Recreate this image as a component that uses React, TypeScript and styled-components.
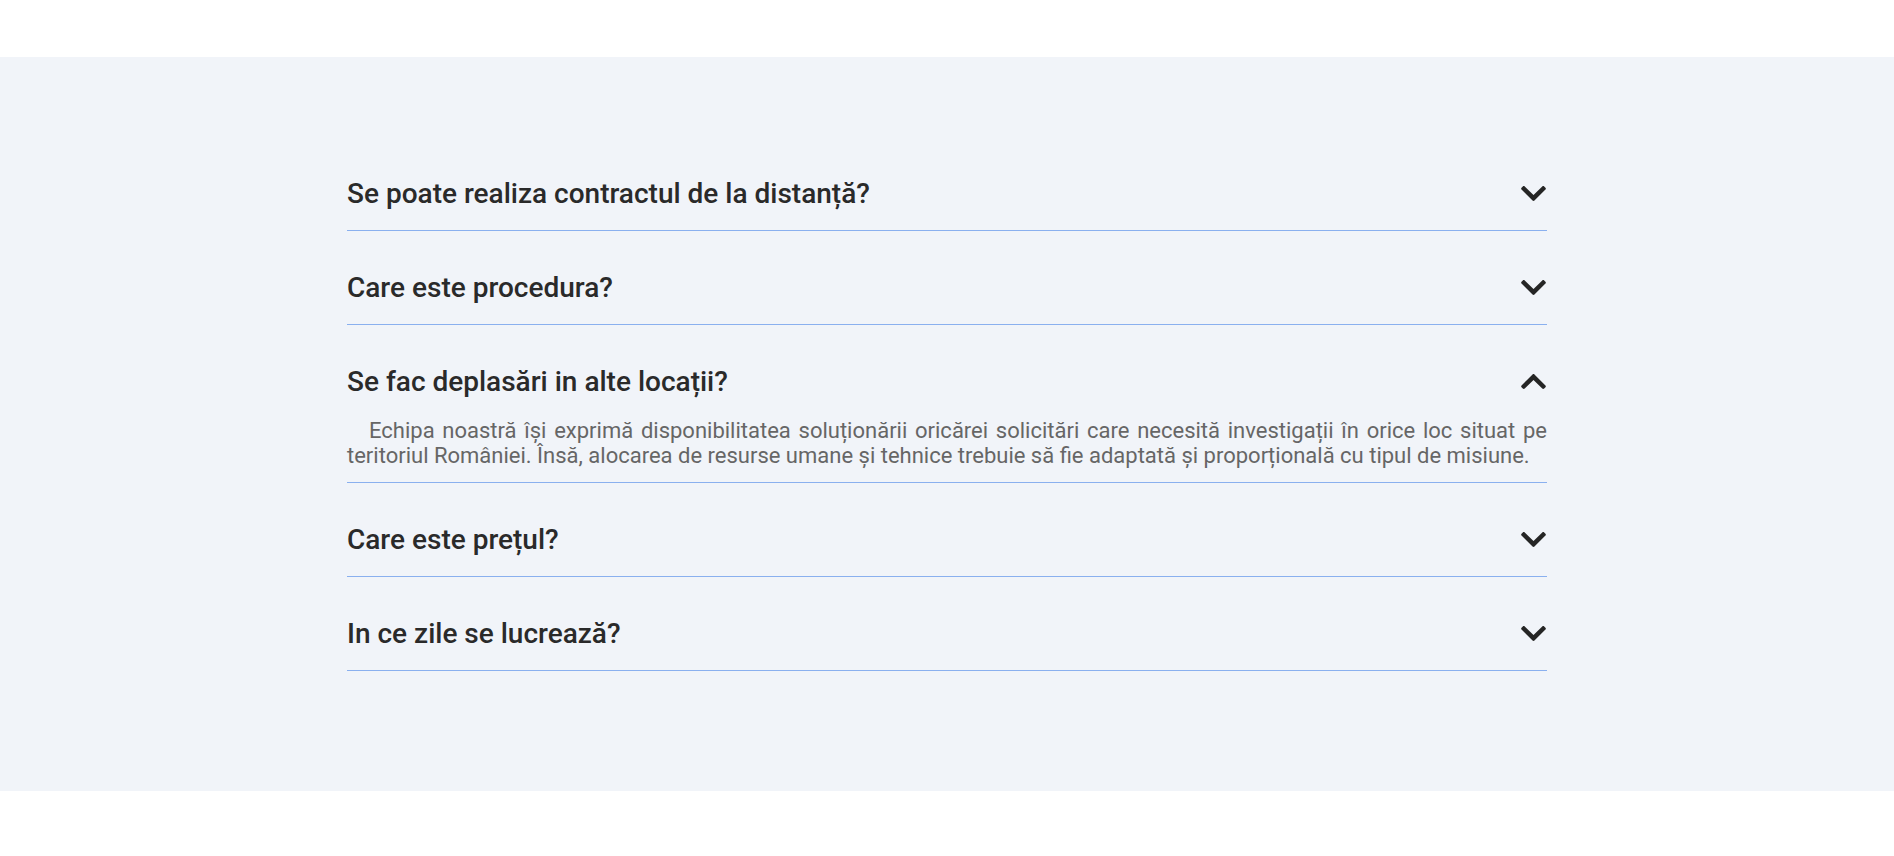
import React, { useState } from "react";
import styled, { createGlobalStyle } from "styled-components";
import { FaChevronDown, FaChevronUp } from "react-icons/fa";

const GlobalStyle = createGlobalStyle`
  html, body { margin: 0; padding: 0; background: #ffffff; }
  body { font-family: Roboto, "Noto Sans", "Liberation Sans", sans-serif; }
  * { box-sizing: border-box; }
`;

const Page = styled.div`
  padding-top: 57px;
  min-height: 856px;
`;

const Section = styled.section`
  background: #f1f4f9;
  padding: 80px 0 120px;
`;

const List = styled.div`
  width: 1200px;
  margin: 0 auto;
  display: flex;
  flex-direction: column;
`;

const Item = styled.div`
  border-bottom: 1px solid #8ab0ef;
`;

const Header = styled.button`
  all: unset;
  display: flex;
  align-items: center;
  justify-content: space-between;
  width: 100%;
  padding: 40px 0 20px;
  cursor: pointer;
`;

const Title = styled.h3`
  margin: 0;
  font-family: Roboto, "Noto Sans", sans-serif;
  font-weight: 500;
  font-size: 28px;
  line-height: normal;
  color: #2a2a2a;
`;

const Icon = styled.span`
  display: flex;
  color: #252525;
  font-size: 29px;
  margin-right: -1px;
`;

const Body = styled.p`
  margin: 0;
  padding: 0 0 13px;
  font-family: Roboto, "Noto Sans", sans-serif;
  font-size: 22px;
  line-height: 25.3px;
  color: #666666;
  text-align: justify;
  text-indent: 22px;
`;

const faqs = [
  { q: "Se poate realiza contractul de la distanță?", a: "" },
  { q: "Care este procedura?", a: "" },
  {
    q: "Se fac deplasări in alte locații?",
    a: "Echipa noastră își exprimă disponibilitatea soluționării oricărei solicitări care necesită investigații în orice loc situat pe teritoriul României. Însă, alocarea de resurse umane și tehnice trebuie să fie adaptată și proporțională cu tipul de misiune.",
  },
  { q: "Care este prețul?", a: "" },
  { q: "In ce zile se lucrează?", a: "" },
];

export default function App() {
  const [open, setOpen] = useState<number>(2);
  return (
    <Page>
      <GlobalStyle />
      <Section>
        <List>
          {faqs.map((f, i) => (
            <Item key={i}>
              <Header onClick={() => setOpen(open === i ? -1 : i)}>
                <Title>{f.q}</Title>
                <Icon>{open === i ? <FaChevronUp /> : <FaChevronDown />}</Icon>
              </Header>
              {open === i && <Body>{f.a}</Body>}
            </Item>
          ))}
        </List>
      </Section>
    </Page>
  );
}
